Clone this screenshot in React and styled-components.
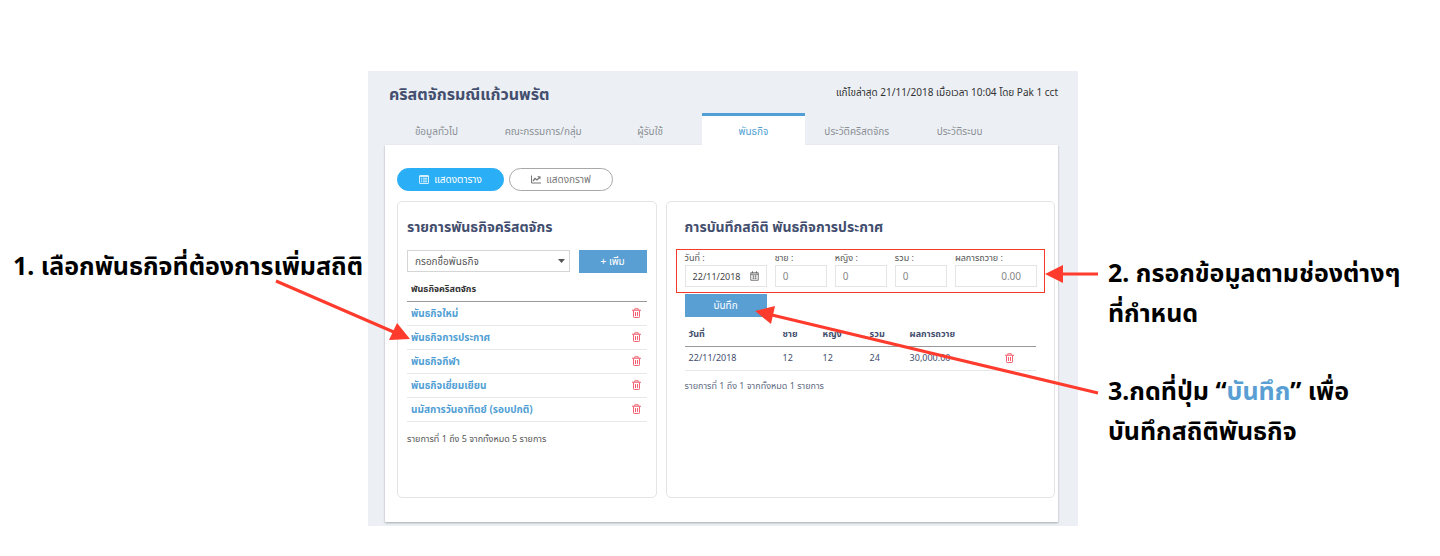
import React from 'react';
import styled, { createGlobalStyle, css } from 'styled-components';

const Global = createGlobalStyle`
  *, *::before, *::after { box-sizing: border-box; }
  body { margin: 0; background: #fff; }
  body, button, input, select {
    font-family: 'Noto Sans', 'Noto Sans Thai', sans-serif;
  }
`;

const Page = styled.main`
  position: relative;
  display: grid;
  grid-template-columns: minmax(0, 368fr) minmax(0, 710fr) minmax(0, 362fr);
  align-items: start;
  padding: 71px 0 30px;
`;

const Notes = styled.aside`
  display: flex;
  flex-direction: column;
  gap: 38px;
  color: #000;
  padding: ${(p) => (p.$side === 'left' ? '174px 0 0 13px' : '181px 0 0 30px')};
`;

const Note = styled.p`
  margin: 0;
  font-size: 25px;
  line-height: 40px;
  font-weight: 700;
  white-space: nowrap;
`;

const Highlight = styled.span`
  color: #5a9fd4;
`;

const Screen = styled.section`
  background: #ecf0f5;
  padding: 0 20px 4px 17px;
`;

const Header = styled.header`
  display: flex;
  justify-content: space-between;
  align-items: center;
  height: 42px;
  padding-left: 4px;
`;

const Title = styled.h1`
  margin: 4px 0 0;
  font-size: 16px;
  line-height: 28px;
  font-weight: 700;
  color: #434e6e;
`;

const Updated = styled.span`
  font-size: 10px;
  line-height: 16px;
  color: #333;
`;

const Tabs = styled.nav`
  display: grid;
  grid-template-columns: 103fr 111fr 103fr 104fr 103fr 103fr 47fr;
  height: 32px;
`;

const Tab = styled.a`
  display: flex;
  align-items: center;
  justify-content: center;
  border-top: 3px solid transparent;
  font-size: 10px;
  line-height: 16px;
  color: #8b8f94;
  text-decoration: none;
  ${(p) => p.$active && css`
    background: #fff;
    border-top-color: #529fd5;
    color: #529fd5;
  `}
`;

const Body = styled.div`
  background: #fff;
  padding: 23px 3px 24px 12px;
  box-shadow: 0 1px 2px rgba(0, 0, 0, 0.3);
`;

const Views = styled.div`
  display: flex;
  gap: 5px;
  margin-bottom: 10px;
`;

const ViewButton = styled.button`
  display: flex;
  align-items: center;
  justify-content: center;
  gap: 5px;
  width: ${(p) => (p.$active ? 107 : 104)}px;
  height: 23px;
  padding: 0;
  border: 1px solid ${(p) => (p.$active ? '#2aaef5' : '#a8a8a8')};
  border-radius: 12px;
  background: ${(p) => (p.$active ? '#2aaef5' : '#fff')};
  color: ${(p) => (p.$active ? '#fff' : '#777')};
  font-size: 10px;
`;

const Columns = styled.div`
  display: grid;
  grid-template-columns: minmax(0, 260fr) minmax(0, 390fr);
  gap: 9px;
`;

const Card = styled.section`
  min-height: 297px;
  border: 1px solid #e3e4e6;
  border-radius: 5px;
  padding: 11px 9px;
`;

const CardTitle = styled.h2`
  margin: 0;
  padding-left: ${(p) => (p.$inset ? 9 : 0)}px;
  font-size: 14px;
  line-height: 28px;
  font-weight: 700;
  color: #434e6e;
`;

const AddRow = styled.div`
  display: grid;
  grid-template-columns: minmax(0, 163fr) minmax(0, 68fr);
  gap: 9px;
  margin: 9px 0 4px;
`;

const SelectBox = styled.div`
  position: relative;
  display: flex;
`;

const Select = styled.select`
  appearance: none;
  width: 100%;
  height: 22px;
  border: 1px solid #d5d5d5;
  border-radius: 0;
  background: #fff;
  color: #555;
  padding: 0 20px 0 7px;
  font-size: 10px;
`;

const Caret = styled.svg`
  position: absolute;
  right: 5px;
  top: 9px;
  pointer-events: none;
`;

const Primary = styled.button`
  display: block;
  width: ${(p) => (p.$save ? '82px' : '100%')};
  height: 23px;
  margin-left: ${(p) => (p.$save ? 9 : 0)}px;
  padding: 0;
  border: 0;
  background: #5a9fd4;
  color: #fff;
  font-size: 10px;
`;

const Table = styled.table`
  width: 100%;
  border-collapse: collapse;
  table-layout: fixed;
  font-size: 9px;
  line-height: 14px;
  text-align: left;
  color: ${(p) => (p.$tone === 'dark' ? '#333' : '#434e6e')};

  th { height: 24px; padding: 0 4px; border-bottom: 1px solid #999; white-space: nowrap; }
  td { height: 24px; padding: 0 4px; border-bottom: 1px solid #e8e8e8; white-space: nowrap; }
`;

const MissionLink = styled.a`
  color: #529fd5;
  font-size: 10px;
  font-weight: 700;
  text-decoration: none;
`;

const IconButton = styled.button`
  display: block;
  margin-left: auto;
  margin-right: ${(p) => (p.$wide ? 18 : 2)}px;
  padding: 0;
  border: 0;
  background: none;
  color: #f4606f;
  line-height: 0;
`;

const Summary = styled.p`
  margin: ${(p) => (p.$inset ? 8 : 10)}px 0 0;
  padding-left: ${(p) => (p.$inset ? 9 : 0)}px;
  font-size: 9px;
  line-height: 14px;
  color: ${(p) => (p.$inset ? '#606a82' : '#555')};
`;

const Entry = styled.form`
  margin: 0;
`;

const Fields = styled.div`
  display: grid;
  grid-template-columns: minmax(0, 82fr) minmax(0, 52fr) minmax(0, 52fr) minmax(0, 52fr) minmax(0, 82fr);
  gap: 8px;
  height: 44px;
  margin: 8px 0 1px;
  padding: 0 7px 0 8px;
  border: 1px solid #f5392b;
`;

const Field = styled.label`
  position: relative;
  display: block;
  font-size: 9px;
  line-height: 15px;
  color: #555;
`;

const Input = styled.input`
  display: block;
  width: 100%;
  height: 22px;
  border: 1px solid #e5e5e5;
  padding: 0 ${(p) => (p.$end ? 15 : 7)}px 0 7px;
  font-size: ${(p) => (p.$date ? 9 : 10)}px;
  color: ${(p) => (p.$date ? '#444' : '#888')};
  text-align: ${(p) => (p.$end ? 'right' : 'left')};
`;

const DateIcon = styled.svg`
  position: absolute;
  right: 8px;
  top: 21px;
`;

const TableWrap = styled.div`
  padding: 5px 9px 0;
`;

const Arrows = styled.svg`
  position: absolute;
  inset: 0;
  width: 100%;
  height: 100%;
  pointer-events: none;
`;

const TrashIcon = () => (
  <svg width="9" height="10" viewBox="0 0 18 20" fill="none" stroke="currentColor" strokeWidth="2">
    <path d="M0 4.500h18M5.500 4V1.500h7V4M3 5v12.500a1.500 1.500 0 0 0 1.500 1.500h9a1.500 1.500 0 0 0 1.500-1.500V5M7 8v8M11 8v8" />
  </svg>
);

const TableIcon = () => (
  <svg width="10" height="9" viewBox="0 0 20 18" fill="none" stroke="currentColor" strokeWidth="1.600">
    <rect x="1" y="1" width="18" height="16" rx="1" />
    <path d="M1 3h18M4 6.500h2M7.500 6.500h9M4 10h2M7.500 10h9M4 13.500h2M7.500 13.500h9" />
  </svg>
);

const ChartIcon = () => (
  <svg width="10" height="9" viewBox="0 0 20 18" fill="none" stroke="currentColor">
    <path d="M1 1v15h19" strokeWidth="2" />
    <path d="M4 12l4-5 4 3 5-5" strokeWidth="2.600" />
    <path d="M12.500 2.500H19V9z" fill="currentColor" stroke="none" />
  </svg>
);

const tabs = ['ข้อมูลทั่วไป', 'คณะกรรมการ/กลุ่ม', 'ผู้รับใช้', 'พันธกิจ', 'ประวัติคริสตจักร', 'ประวัติระบบ'];
const missions = ['พันธกิจใหม่', 'พันธกิจการประกาศ', 'พันธกิจกีฬา', 'พันธกิจเยี่ยมเยียน', 'นมัสการวันอาทิตย์ (รอบปกติ)'];

function MissionCard() {
  return (
    <Card>
      <CardTitle>รายการพันธกิจคริสตจักร</CardTitle>
      <AddRow>
        <SelectBox>
          <Select aria-label="กรอกชื่อพันธกิจ">
            <option>กรอกชื่อพันธกิจ</option>
          </Select>
          <Caret width="7" height="4" viewBox="0 0 7 4"><path d="M0 0h7L3.500 4z" fill="#555" /></Caret>
        </SelectBox>
        <Primary type="button">+ เพิ่ม</Primary>
      </AddRow>
      <Table $tone="dark">
        <colgroup><col /><col width="40" /></colgroup>
        <thead><tr><th colSpan={2}>พันธกิจคริสตจักร</th></tr></thead>
        <tbody>
          {missions.map((name) => (
            <tr key={name}>
              <td><MissionLink href="#">{name}</MissionLink></td>
              <td><IconButton type="button" aria-label="ลบ"><TrashIcon /></IconButton></td>
            </tr>
          ))}
        </tbody>
      </Table>
      <Summary>รายการที่ 1 ถึง 5 จากทั้งหมด 5 รายการ</Summary>
    </Card>
  );
}

function StatsCard() {
  return (
    <Card>
      <CardTitle $inset>การบันทึกสถิติ พันธกิจการประกาศ</CardTitle>
      <Entry onSubmit={(e) => e.preventDefault()}>
        <Fields>
          <Field>
            วันที่ :
            <Input $date defaultValue="22/11/2018" />
            <DateIcon width="9" height="10" viewBox="0 0 18 20" fill="none" stroke="#555" strokeWidth="1.600">
              <path d="M1.500 3.500h15v15h-15zM1.500 6.500h15M5 0.500v4M13 0.500v4" />
              <path d="M4 10h10M4 14.500h10M7 8.500v8M11 8.500v8" strokeWidth="1" />
            </DateIcon>
          </Field>
          <Field>ชาย :<Input defaultValue="0" /></Field>
          <Field>หญิง :<Input defaultValue="0" /></Field>
          <Field>รวม :<Input defaultValue="0" /></Field>
          <Field>ผลการถวาย :<Input $end defaultValue="0.00" /></Field>
        </Fields>
        <Primary $save type="submit">บันทึก</Primary>
      </Entry>
      <TableWrap>
        <Table>
          <colgroup><col width="94" /><col width="40" /><col width="47" /><col width="40" /><col width="70" /><col /></colgroup>
          <thead>
            <tr><th>วันที่</th><th>ชาย</th><th>หญิง</th><th>รวม</th><th>ผลการถวาย</th><th /></tr>
          </thead>
          <tbody>
            <tr>
              <td>22/11/2018</td><td>12</td><td>12</td><td>24</td><td>30,000.00</td>
              <td><IconButton $wide type="button" aria-label="ลบ"><TrashIcon /></IconButton></td>
            </tr>
          </tbody>
        </Table>
      </TableWrap>
      <Summary $inset>รายการที่ 1 ถึง 1 จากทั้งหมด 1 รายการ</Summary>
    </Card>
  );
}

export default function App() {
  return (
    <Page>
      <Global />
      <Notes $side="left">
        <Note>1. เลือกพันธกิจที่ต้องการเพิ่มสถิติ</Note>
      </Notes>
      <Screen>
        <Header>
          <Title>คริสตจักรมณีแก้วนพรัต</Title>
          <Updated>แก้ไขล่าสุด 21/11/2018 เมื่อเวลา 10:04 โดย Pak 1 cct</Updated>
        </Header>
        <Tabs>
          {tabs.map((t) => <Tab key={t} href="#" $active={t === 'พันธกิจ'}>{t}</Tab>)}
        </Tabs>
        <Body>
          <Views>
            <ViewButton type="button" $active><TableIcon />แสดงตาราง</ViewButton>
            <ViewButton type="button"><ChartIcon />แสดงกราฟ</ViewButton>
          </Views>
          <Columns>
            <MissionCard />
            <StatsCard />
          </Columns>
        </Body>
      </Screen>
      <Notes $side="right">
        <Note>2. กรอกข้อมูลตามช่องต่างๆ<br />ที่กำหนด</Note>
        <Note>3.กดที่ปุ่ม “<Highlight>บันทึก</Highlight>” เพื่อ<br />บันทึกสถิติพันธกิจ</Note>
      </Notes>
      <Arrows viewBox="0 0 1440 556" preserveAspectRatio="none" aria-hidden="true">
        <g stroke="#ff3b2d" strokeWidth="3">
          <path d="M276 281L396 333M1098 274H1060M1098 393L772 315" />
        </g>
        <path fill="#ff3b2d" d="M410 339L397 323L389 340zM1045 274L1063 265V283zM755 311L775 306L771 324z" />
      </Arrows>
    </Page>
  );
}
